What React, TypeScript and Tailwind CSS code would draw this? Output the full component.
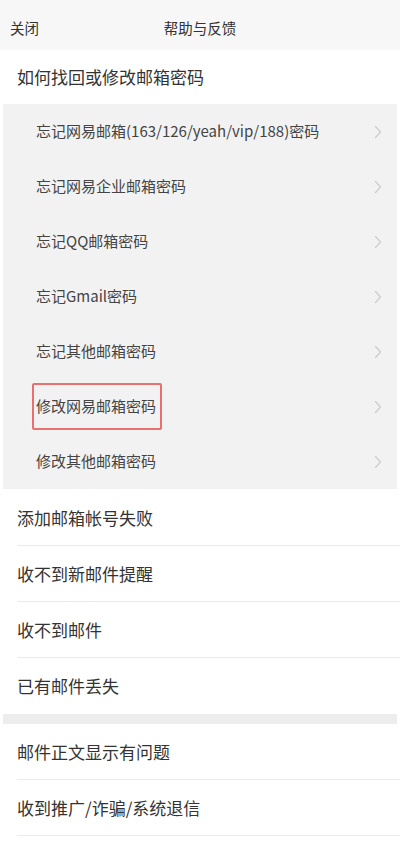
const font = { fontFamily: '"Noto Sans CJK SC", "Noto Sans", sans-serif' }

const forgotItems = [
  '忘记网易邮箱(163/126/yeah/vip/188)密码',
  '忘记网易企业邮箱密码',
  '忘记QQ邮箱密码',
  '忘记Gmail密码',
  '忘记其他邮箱密码',
  '修改网易邮箱密码',
  '修改其他邮箱密码',
]

const groupA = ['添加邮箱帐号失败', '收不到新邮件提醒', '收不到邮件', '已有邮件丢失']
const groupB = ['邮件正文显示有问题', '收到推广/诈骗/系统退信']

function Chevron() {
  return (
    <svg width="8" height="14" viewBox="0 0 8 14" fill="none" className="shrink-0">
      <path d="M1.5 1.5 L6.5 7 L1.5 12.5" stroke="#cccccc" strokeWidth="1.2" strokeLinecap="round" strokeLinejoin="round" />
    </svg>
  )
}

function PlainRow({ label, last }: { label: string; last?: boolean }) {
  return (
    <div className="pl-[17px]">
      <div
        className={`flex h-[56px] items-center text-[17px] text-[#333] ${last ? '' : 'border-b border-[#ebebeb]'}`}
      >
        {label}
      </div>
    </div>
  )
}

export default function App() {
  return (
    <div className="min-h-[843px] w-[400px] bg-white" style={font}>
      <div className="relative flex h-[50px] items-center bg-[#f7f7f7] px-[10px] pt-[6px]">
        <span className="text-[14.5px] text-[#333]">关闭</span>
        <span className="absolute inset-x-0 top-0 bottom-0 flex items-center justify-center pt-[6px] text-[14.5px] text-[#333]">
          帮助与反馈
        </span>
      </div>

      <div className="flex h-[54px] items-center pl-[17px] text-[17px] text-[#333]">如何找回或修改邮箱密码</div>

      <div className="mx-[3px] bg-[#f2f2f2]">
        {forgotItems.map((item) => (
          <div key={item} className="flex h-[55px] items-center justify-between pl-[33px] pr-[15px]">
            {item === '修改网易邮箱密码' ? (
              <span className="-ml-[4px] flex h-[47px] w-[130px] items-center rounded-[2px] border-2 border-solid border-[#e87070] pl-[2px] text-[15px] text-[#444]">
                {item}
              </span>
            ) : (
              <span className="text-[15px] text-[#444]">{item}</span>
            )}
            <Chevron />
          </div>
        ))}
      </div>

      <div className="pt-px">
        {groupA.map((item, i) => (
          <PlainRow key={item} label={item} last={i === groupA.length - 1} />
        ))}
      </div>

      <div className="mx-[3px] h-[10px] bg-[#ededed]" />

      <div>
        {groupB.map((item) => (
          <PlainRow key={item} label={item} />
        ))}
      </div>
    </div>
  )
}
